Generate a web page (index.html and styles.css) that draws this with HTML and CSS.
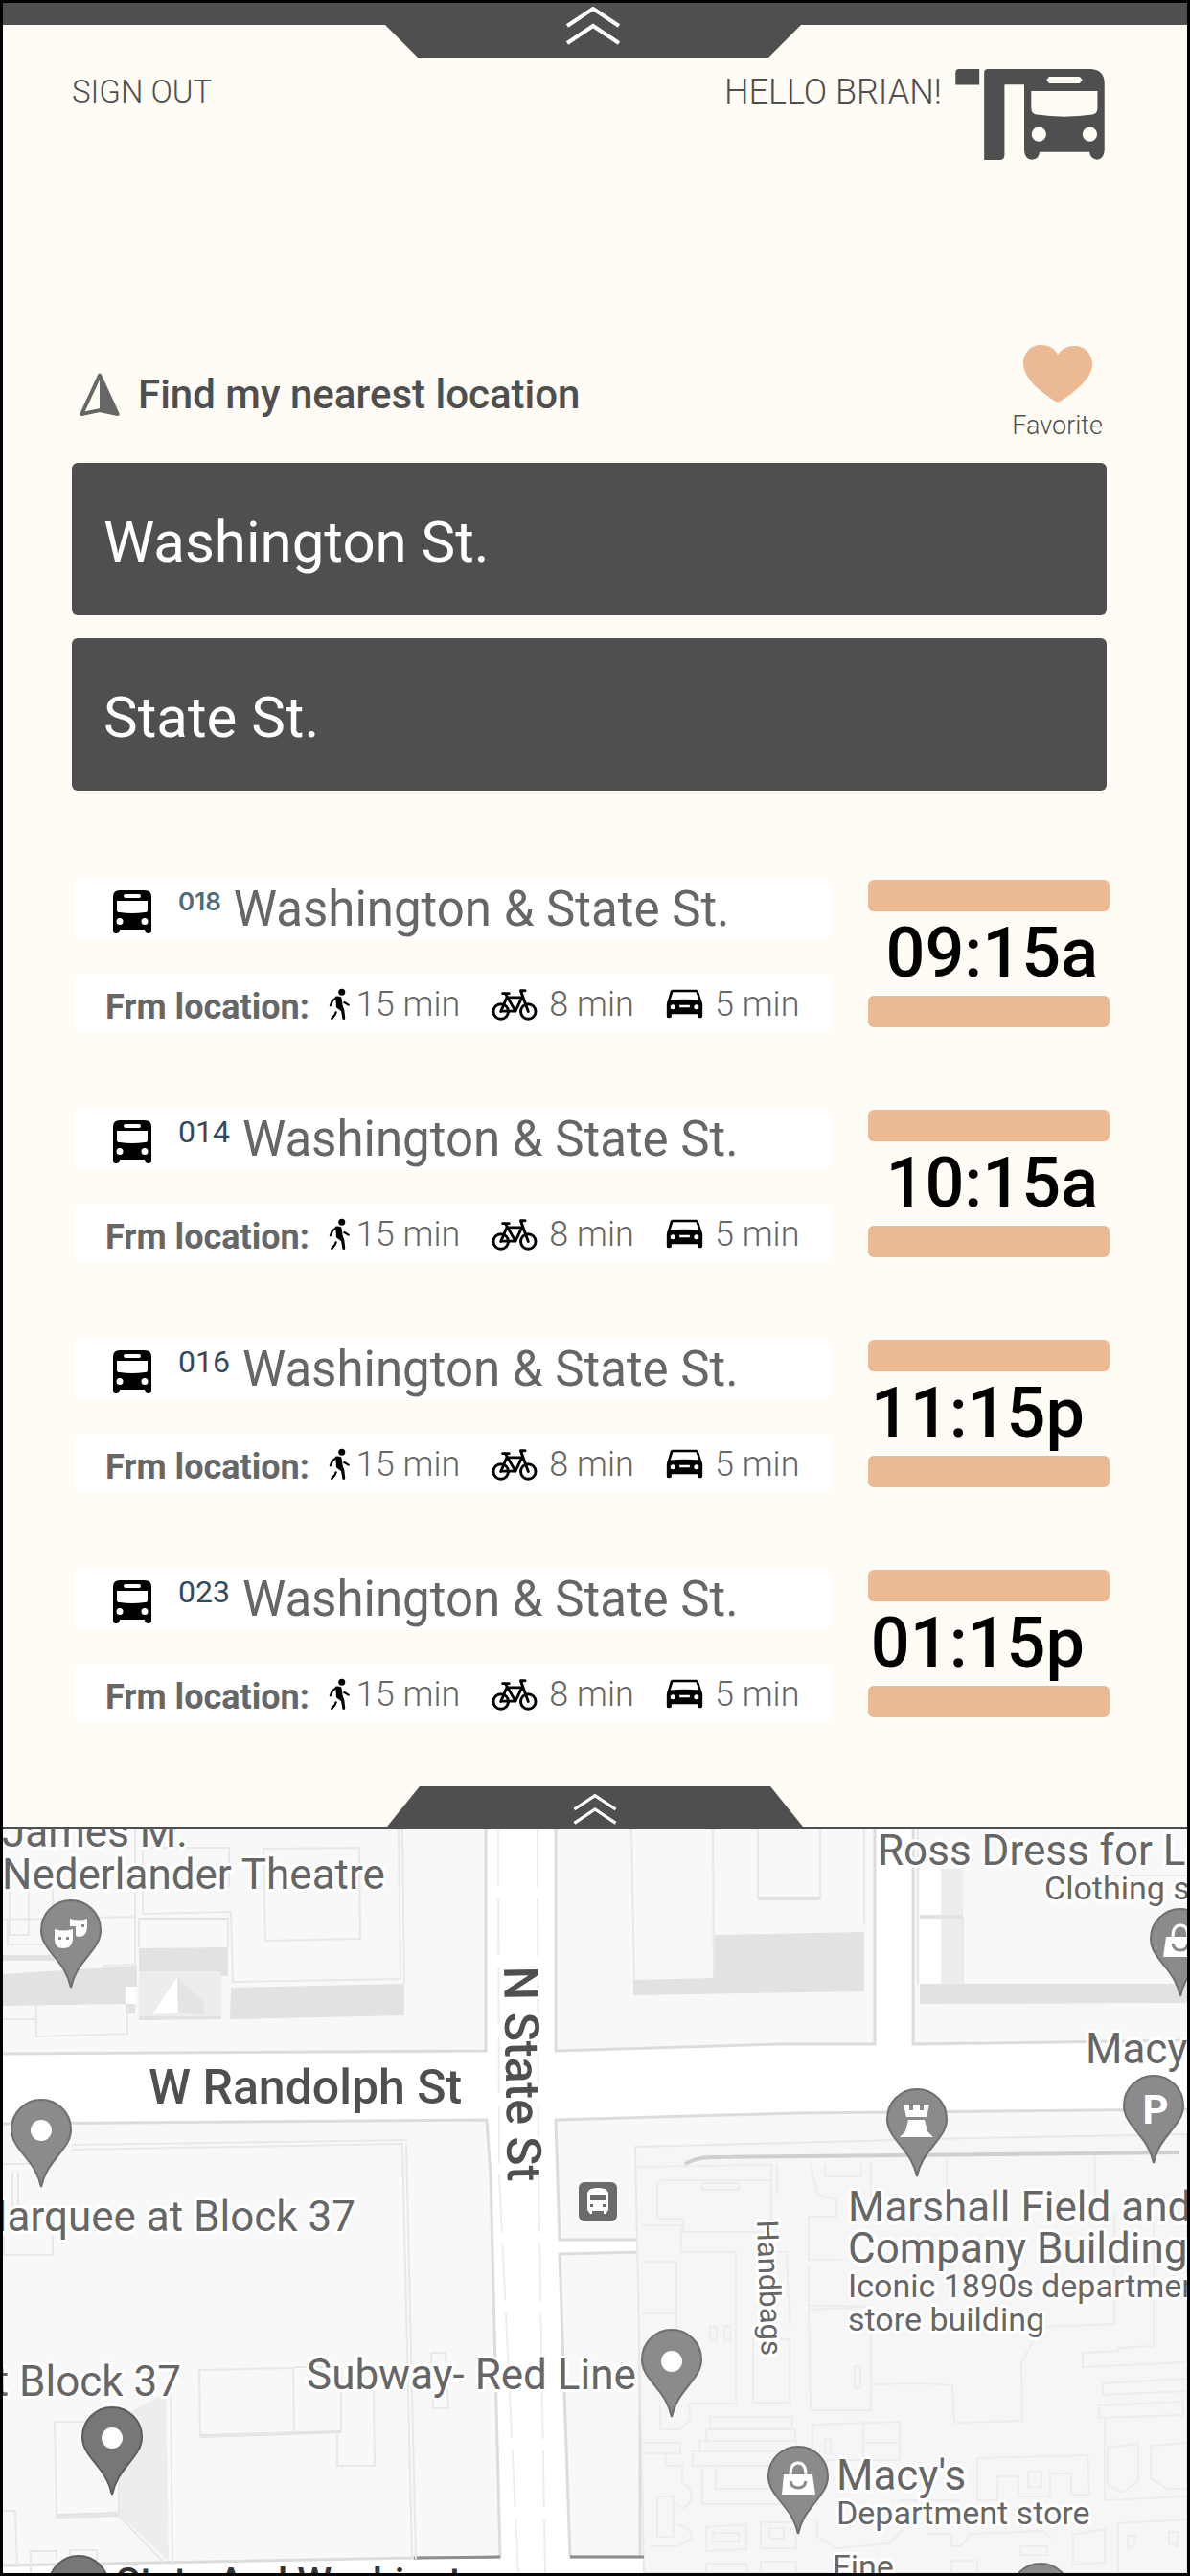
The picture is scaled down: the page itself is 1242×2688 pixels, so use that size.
FILE: index.html
```html
<!DOCTYPE html>
<html lang="en">
  <head>
    <meta charset="UTF-8" />
    <meta name="viewport" content="width=device-width, initial-scale=1.0" />
    <title>Transit Buddy</title>
    <link rel="stylesheet" href="styles.css">
  </head>
  <body>
    <!-- shared icons -->
    <svg class="sprite" aria-hidden="true">
      <symbol id="chevrons" viewBox="0 0 58 40">
        <path d="M2 20 L29 2 L56 20 M2 38 L29 20 L56 38" fill="none" stroke="#fff" stroke-width="4" />
      </symbol>
      <symbol id="bus" viewBox="0 0 40 45">
        <path fill-rule="evenodd" d="M7 0 H33 Q40 0 40 7 V42 Q40 45 37 45 Q33 45 33 41 H7 Q7 45 3 45 Q0 45 0 42 V7 Q0 0 7 0 Z M13 4 Q11 4 11 6 Q11 8 13 8 H27 Q29 8 29 6 Q29 4 27 4 Z M4 11 V21 Q4 23 7 23 Q20 25 33 23 Q36 23 36 21 V11 Z M7 29 A3.5 3.5 0 1 0 7 36 A3.5 3.5 0 1 0 7 29 Z M33 29 A3.5 3.5 0 1 0 33 36 A3.5 3.5 0 1 0 33 29 Z" />
      </symbol>
      <symbol id="walk" viewBox="66 58 72 106">
        <circle cx="109" cy="71" r="11" />
        <path d="M89 85 Q99 82 108 88 L112 116 L117 130 L120 156 Q120 161 115 161 Q112 161 111 157 L107 134 L91 121 L90 104 Z" />
        <path d="M92 89 L78 100 L72 115 M90 137 L86 146 L76 158 M117 105 L131 113" fill="none" stroke="#000" stroke-width="7" stroke-linecap="round" />
      </symbol>
      <symbol id="bike" viewBox="586 56 148 104">
        <g fill="none" stroke="#000" stroke-width="9" stroke-linecap="round" stroke-linejoin="round">
          <circle cx="616" cy="131" r="24" />
          <circle cx="704" cy="131" r="24" />
          <path d="M616 131 L635 86 H684 L663 130 H618 M663 130 L632 76 M704 131 L680 64 H694" />
          <path d="M622 73 H642" />
        </g>
      </symbol>
      <symbol id="car" viewBox="1126 64 122 98">
        <path fill-rule="evenodd" d="M1146 66 H1226 Q1231 66 1233 72 L1243 104 Q1246 108 1246 114 V154 Q1246 160 1238 160 Q1230 160 1230 154 V147 H1144 V154 Q1144 160 1136 160 Q1128 160 1128 154 V114 Q1128 108 1131 104 L1140 72 Q1142 66 1146 66 Z M1149 74 L1140 100 Q1187 96 1234 100 L1225 74 Z M1148 115 A8 8 0 1 0 1148 131 A8 8 0 1 0 1148 115 Z M1226 115 A8 8 0 1 0 1226 131 A8 8 0 1 0 1226 115 Z M1170 117 V125 H1204 V117 Z" />
      </symbol>
      <symbol id="pin" viewBox="-33 -93 66 94" overflow="visible">
        <path d="M0 0 C-3 -14 -9 -22 -17 -32 C-26 -43 -31 -50 -31 -60 A31 31 0 0 1 31 -60 C31 -50 26 -43 17 -32 C9 -22 3 -14 0 0 Z" />
      </symbol>
    </svg>

    <div class="screen">
      <div class="top-bar">
        <button class="tab tab-top" aria-label="Close menu">
          <svg class="chevrons" width="58" height="40"><use href="#chevrons" /></svg>
        </button>
      </div>

      <header class="header">
        <a class="sign-out" href="#">SIGN OUT</a>
        <div class="greeting">
          <span>HELLO BRIAN!</span>
          <svg class="logo" width="156" height="95" viewBox="108 96 468 286" role="img" aria-label="Transit Buddy logo">
            <path d="M108 146 V107 Q108 96 119 96 H183 V146 Z" />
            <path fill-rule="evenodd" d="M198 382 V108 Q198 96 210 96 H534 Q576 98 576 142 V352 Q574 380 552 381 Q531 378 529 357 H372 Q370 380 348 381 Q325 380 324 352 V145 H262 V366 Q262 382 246 382 Z M402 120 L394 130 L402 141 H498 L507 130 L498 120 Z M346 165 V220 Q347 236 362 239 Q450 252 539 239 Q553 236 554 220 V165 Z M370 278 A23 23 0 1 0 370 324 A23 23 0 1 0 370 278 Z M530 278 A23 23 0 1 0 530 324 A23 23 0 1 0 530 278 Z" />
          </svg>
        </div>
      </header>

      <main class="content">
        <div class="search-head">
          <button class="locate">
            <svg width="42" height="46" viewBox="36 78 128 140">
              <path d="M100 86 L157 209 L100 197 L43 209 Z" fill="none" stroke="#666" stroke-width="12" stroke-linejoin="round" />
              <path d="M100 86 L157 209 L100 197 Z" fill="#666" />
            </svg>
            Find my nearest location
          </button>
          <button class="favorite">
            <svg width="72" height="60" viewBox="0 0 72 60">
              <path d="M36 60 C22 52 0 36 0 19 C0 8 8 0 18 0 C27 0 33 4 36 10 C40 4 46 1 54 1 C64 1 72 9 72 20 C72 36 50 52 36 60 Z" />
            </svg>
            Favorite
          </button>
        </div>

        <form class="search">
          <input type="text" aria-label="First street" value="Washington St." />
          <input type="text" aria-label="Cross street" value="State St." />
        </form>
      </main>

      <ul class="routes">
        <li class="route">
          <div class="info">
            <div class="strip name">
              <svg width="40" height="45"><use href="#bus" /></svg>
              <span class="code code-small">018</span>
              <span class="stop">Washington &amp; State St.</span>
            </div>
            <div class="strip trips">
              <b>Frm location:</b>
              <span class="trip walk"><svg width="23" height="34"><use href="#walk" /></svg>15 min</span>
              <span class="trip"><svg width="48" height="34"><use href="#bike" /></svg>8 min</span>
              <span class="trip"><svg width="39" height="31"><use href="#car" /></svg>5 min</span>
            </div>
          </div>
          <time class="time">09:15a</time>
        </li>
        <li class="route">
          <div class="info">
            <div class="strip name">
              <svg width="40" height="45"><use href="#bus" /></svg>
              <span class="code">014</span>
              <span class="stop">Washington &amp; State St.</span>
            </div>
            <div class="strip trips">
              <b>Frm location:</b>
              <span class="trip walk"><svg width="23" height="34"><use href="#walk" /></svg>15 min</span>
              <span class="trip"><svg width="48" height="34"><use href="#bike" /></svg>8 min</span>
              <span class="trip"><svg width="39" height="31"><use href="#car" /></svg>5 min</span>
            </div>
          </div>
          <time class="time">10:15a</time>
        </li>
        <li class="route">
          <div class="info">
            <div class="strip name">
              <svg width="40" height="45"><use href="#bus" /></svg>
              <span class="code">016</span>
              <span class="stop">Washington &amp; State St.</span>
            </div>
            <div class="strip trips">
              <b>Frm location:</b>
              <span class="trip walk"><svg width="23" height="34"><use href="#walk" /></svg>15 min</span>
              <span class="trip"><svg width="48" height="34"><use href="#bike" /></svg>8 min</span>
              <span class="trip"><svg width="39" height="31"><use href="#car" /></svg>5 min</span>
            </div>
          </div>
          <time class="time pm">11:15p</time>
        </li>
        <li class="route">
          <div class="info">
            <div class="strip name">
              <svg width="40" height="45"><use href="#bus" /></svg>
              <span class="code">023</span>
              <span class="stop">Washington &amp; State St.</span>
            </div>
            <div class="strip trips">
              <b>Frm location:</b>
              <span class="trip walk"><svg width="23" height="34"><use href="#walk" /></svg>15 min</span>
              <span class="trip"><svg width="48" height="34"><use href="#bike" /></svg>8 min</span>
              <span class="trip"><svg width="39" height="31"><use href="#car" /></svg>5 min</span>
            </div>
          </div>
          <time class="time pm">01:15p</time>
        </li>
      </ul>

      <button class="tab tab-bottom" aria-label="Open map">
        <svg class="chevrons" width="50" height="32"><use href="#chevrons" /></svg>
      </button>

      <section class="map" aria-label="Map">
        <svg viewBox="0 0 1236 776">
          <!-- blocks -->
          <g class="block">
            <path d="M-5 -5 H504 V231 L-5 234 Z" />
            <path d="M577 -5 H910 V224 L810 224 L577 231 Z" />
            <path d="M950 -5 H1241 V220 L950 224 Z" />
            <path d="M-5 307 L505 303 L509 361 L519 759 L429 760 L-5 768 Z" />
            <path d="M577 303 L826 296 L1241 292 V428 H581 Z" />
            <path d="M581 443 L665 441 V759 H592 Z" />
          </g>
          <path class="macys" d="M660 331 L1010 322 L1236 318 V776 H669 Z" />

          <!-- lanes -->
          <path class="lane" d="M517 0 L518 361 L538 776 M558 0 L559 361 L566 776" />
          <path d="M429 760 L519 759 M592 759 H669" stroke="#8e8e8e" stroke-width="3" />
          <path d="M712 349 Q724 342 740 342 L1228 337" fill="none" stroke="#cfcfcf" stroke-width="4" />

          <!-- building shadows -->
          <g fill="#e2e2e2">
            <path d="M238 165 L419 161 V194 L237 198 Z" />
            <path d="M142 124 L235 123 V153 L228 153 V148 H142 Z" />
            <path d="M0 151 L140 142 V164 H128 V182 L0 184 Z" />
            <path d="M0 131 H54 V137 H0 Z M128 182 H138 V192 H128 Z M142 195 H228 V198 L142 199 Z" />
            <path d="M658 157 L743 155 V110 L899 107 V169 L658 173 Z" />
            <path d="M957 161 H1236 V181 L957 182 Z" />
            <path d="M788 70 H853 V74 H788 Z M957 89 H1002 V93 H957 Z" />
            <path d="M142 92 H235 V94 H142 Z M206 631 L353 627 V630 L206 635 Z M56 714 L121 712 V717 L56 719 Z" />
          </g>
          <g fill="#ededed">
            <path d="M142 148 H228 V195 H142 Z" />
            <path d="M979 41 H1002 V89 H979 Z M979 93 H1002 V161 H979 Z" />
            <path d="M132 608 L170 588 L173 763 L121 714 V620 Z" />
          </g>
          <path d="M156 193 L182 154 L183 191 Z M957 41 H979 V89 H957 Z M957 93 H979 V161 H957 Z M128 164 H138 V182 H128 Z" fill="#fff" />
          <path d="M182 154 L210 181 V193 L183 191 Z" fill="#e4e4e4" />

          <!-- building outlines -->
          <g class="outline">
            <path d="M272 20 L372 19 L373 114 L274 116 Z" />
            <path d="M413 0 L415 156 L240 159 L238 86 L146 88 V19 H236 V60 M417 0 L419 161" />
            <path d="M142 92 V123 M235 92 V123 M138 0 V141 L104 142 M0 94 L138 91 M5 95 V120 H50 M27 60 V110 H7 V60 M52 60 V85" />
            <path d="M35 184 V216 L130 213 V182 M0 198 H35" />
            <path d="M656 0 L659 157 M741 0 L742 155 M788 0 V73 M853 0 V73 M899 0 V98 M1002 91 V161 M955 0 V161 M1160 48 H1236" />
            <path d="M72 329 L422 324 M72 334 L417 328 L427 761 M421 328 L431 761 M0 349 H30 M10 357 V400 M16 357 V400" />
            <path d="M205 564 L303 562 L304 629 L206 634 Z M303 561 H353 V629 M387 584 L388 664 H349 V631" />
            <path d="M447 546 H462 L465 604 H449 Z M54 618 L121 618 V714 L56 718 Z M175 575 L177 768 M121 716 L168 765" />
            <path d="M1 424 V444 H52 V424 M0 711 H13 L15 770 M29 776 V753 H56 V762 M70 762 V752 H98 V768" />
          </g>

          <!-- department store floor plan -->
          <g class="plan">
            <path d="M662 352 L802 350 V420 H710 V406 H683 V368 L690 366 H802 M730 369 H768 V376 H730 Z M808 350 V381 M843 348 L850 381 L870 386 V404 H841 V449 H876 M858 350 V362 H896 V348 M906 346 V384 M985 344 V384 M1140 340 V384" />
            <path d="M667 413 H708 V441 H765 V599 H716 L717 616 L706 626 H686 V600 M667 451 H703 V505 H667 M703 505 V580 M738 519 H745 V533 H738 Z M753 518 H759 V533 H753 Z" />
            <path d="M785 441 H818 L821 517 M783 532 H821 V598 H783 Z M841 455 V497 H900 M841 501 L906 498 V606 L843 606 Z M889 560 H895 V583 H889 Z" />
            <path d="M738 613 H824 V625 H738 Z M734 626 H827 V638 H734 Z M727 638 H828 V649 H727 Z M720 649 H840 V664 H720 Z M730 664 V704 H851 M744 664 V688 H800" />
            <path d="M845 621 L936 618 V658 H845 Z M898 620 V658 M898 640 H936 M858 636 H864 V651 H858 Z" />
            <path d="M906 579 L960 578 L991 580 L993 619 L1064 617 L1063 556 L1084 519 L1160 516 V400 M1127 561 L1236 556 M1127 561 V546 L1164 544 V541 L1201 539 V400" />
            <path d="M1148 578 L1236 573 V586 L1148 590 Z M1144 601 L1232 597 V611 L1144 614 Z M1150 616 V700 L1236 696 M1153 645 L1185 641 V680 L1168 692 L1153 684 Z M1236 640 L1198 643 V677 L1215 688 H1236" />
            <path d="M1017 700 V656 L1132 653 L1134 694 H1115 V672 H1093 V696 H1060 V675 H1038 V700 Z M1070 670 H1084 V686 H1070 Z M936 700 H1000" />
            <path d="M668 640 H707 V651 H670 M692 651 V664 H709 V682 Q720 686 718 700 Q712 712 703 704 M683 696 H700 V738 H683 Z M703 725 Q722 730 718 740 L705 748 H675" />
            <path d="M734 728 L776 725 V751 L734 753 Z M741 734 H768 V743 H741 Z M791 723 H828 V750 H791 Z M800 729 H815 V740 H800 Z M734 776 V766 H776 V776 M791 776 V764 H828 V776" />
            <path d="M850 720 V738 L870 750 L925 745 L940 730 M965 735 H990 V748 H1000 L1010 735 L1085 732 L1095 740 M1062 748 H1090 V757 H1062 Z M990 776 V763 H1017 V776 M1117 736 L1150 730 V765 L1117 767 Z M1164 776 V724 L1236 720 M1174 737 H1182 L1180 747 L1174 750 Z M1217 733 H1226 V748 L1217 745 Z" />
          </g>

          <!-- labels -->
          <g class="label">
            <text x="-1" y="18">James M.</text>
            <text x="-1" y="62">Nederlander Theatre</text>
            <text x="913" y="37">Ross Dress for Less</text>
            <text class="small" x="1087" y="73">Clothing store</text>
            <text x="1130" y="244">Macy's</text>
            <text x="368" y="419" text-anchor="end">Marquee at Block 37</text>
            <text x="186" y="591" text-anchor="end">Shops at Block 37</text>
            <text x="317" y="584">Subway- Red Line</text>
            <text x="882" y="409">Marshall Field and</text>
            <text x="882" y="452">Company Building</text>
            <text class="small" x="882" y="488">Iconic 1890s department</text>
            <text class="small" x="882" y="523">store building</text>
            <text x="870" y="689">Macy's</text>
            <text class="small" x="870" y="725">Department store</text>
            <text class="small" x="866" y="781">Fine</text>
            <text class="aisle" transform="translate(787 408) rotate(88)">Handbags</text>
            <text class="street" x="152" y="286">W Randolph St</text>
            <text class="street" transform="translate(523 143) rotate(89)">N State St</text>
            <text class="station" x="118" y="799">State And Washington</text>
          </g>

          <!-- pins -->
          <g class="pins">
            <use href="#pin" x="38" y="72" width="66" height="94" />
            <use href="#pin" x="7" y="280" width="66" height="94" />
            <use class="dark" href="#pin" x="81" y="601" width="66" height="94" />
            <use href="#pin" x="665" y="520" width="66" height="94" />
            <use href="#pin" x="797" y="642" width="66" height="94" />
            <use href="#pin" x="921" y="269" width="66" height="94" />
            <use href="#pin" x="1168" y="255" width="66" height="94" />
            <use href="#pin" x="1196" y="81" width="66" height="94" />
            <use class="dark" href="#pin" x="46" y="756" width="66" height="94" />
            <use href="#pin" x="1050" y="764" width="66" height="94" />
          </g>
          <g fill="#fff">
            <circle cx="40" cy="314" r="11" />
            <circle cx="114" cy="635" r="11" />
            <circle cx="698" cy="555" r="11" />
            <!-- theatre masks -->
            <path fill-rule="evenodd" d="M54 104 Q63 107 73 104 V115 Q72 124 63 124 Q54 124 54 115 Z M58 112 V115 H61 V112 Z M66 112 V115 H69 V112 Z" />
            <path fill-rule="evenodd" d="M70 93 Q79 96 88 93 V103 Q87 112 79 112 L76 111 V101 H70 Z M82 99 V102 H85 V99 Z" />
            <!-- rook -->
            <path d="M940 287 H946 V293 H950 V287 H957 V293 H961 V287 H967 L964 300 H943 Z M945 303 H962 L965 315 L971 321 H936 L942 315 Z" />
            <!-- shopping bags -->
            <path d="M815 673 H845 L848 694 H813 Z" />
            <path d="M1214 112 H1244 L1247 133 H1211 Z" />
          </g>
          <path d="M822 673 Q822 661 830 661 Q838 661 838 673 M1221 112 Q1221 100 1229 100 Q1237 100 1237 112" fill="none" stroke="#fff" stroke-width="3" />
          <path d="M822 680 Q823 687 830 687 Q837 687 838 680 M1221 119 Q1222 126 1229 126 Q1236 126 1237 119" fill="none" stroke="#8b8b8b" stroke-width="3" />
          <text class="parking" x="1203" y="307" text-anchor="middle">P</text>

          <!-- bus stop -->
          <rect x="601" y="368" width="40" height="41" rx="6" fill="#6b6b6b" />
          <path fill="#fff" fill-rule="evenodd" d="M614 375 Q621 373 628 375 Q632 376 632 381 V397 L629 401 H627 V398 H615 V401 H613 L610 397 V381 Q610 376 614 375 Z M613 381 V387 H629 V381 Z M613 391 V394 H616 V391 Z M626 391 V394 H629 V391 Z" />
        </svg>
      </section>
    </div>
  </body>
</html>
```

FILE: styles.css
```css
* {
  box-sizing: border-box;
}
body {
  margin: 0;
  background: #fffcf6;
  color: #4f4f4f;
  font-family: Roboto, "Liberation Sans", sans-serif;
}
button {
  padding: 0;
  border: 0;
  background: none;
  color: inherit;
  font-family: inherit;
}
svg {
  display: block;
  flex: none;
}
.sprite {
  position: absolute;
  width: 0;
  height: 0;
}
.screen {
  display: flex;
  flex-direction: column;
  min-height: 100vh;
  border: 3px solid #000;
}

/* drawer tabs */
.top-bar {
  position: relative;
  height: 23px;
  background: #4f4f4f;
}
.tab {
  display: flex;
  justify-content: center;
  width: 434px;
  background: #4f4f4f;
}
.tab-top {
  position: absolute;
  top: 0;
  left: 50%;
  margin-left: -219px;
  height: 57px;
  padding-top: 4px;
  clip-path: polygon(0 0, 100% 0, 100% 23px, 400px 100%, 34px 100%, 0 23px);
}
.tab-bottom {
  align-self: center;
  height: 42px;
  margin-top: 66px;
  padding-top: 8px;
  clip-path: polygon(34px 0, 400px 0, 100% 100%, 0 100%);
}

/* header */
.header {
  display: flex;
  justify-content: space-between;
  padding: 46px 86px 0 72px;
  font-weight: 300;
  line-height: 40px;
}
.sign-out {
  padding-top: 4px;
  color: inherit;
  font-size: 33px;
  text-decoration: none;
}
.greeting {
  display: flex;
  gap: 14px;
  font-size: 36px;
}
.greeting span {
  padding-top: 4px;
}
.logo {
  fill: #4f4f4f;
}

/* search */
.content {
  padding: 193px 84px 0 72px;
}
.search-head {
  display: flex;
  justify-content: space-between;
  align-items: flex-start;
  padding: 0 4px 0 8px;
}
.locate {
  display: flex;
  align-items: center;
  gap: 19px;
  padding-top: 27px;
  font-size: 42px;
  font-weight: 500;
  line-height: 50px;
}
.favorite {
  display: flex;
  flex-direction: column;
  align-items: center;
  gap: 8px;
  font-size: 27px;
  font-weight: 300;
  line-height: 32px;
}
.favorite svg {
  fill: #ebb994;
}
.search {
  display: flex;
  flex-direction: column;
  gap: 24px;
  margin-top: 23px;
}
.search input {
  width: 100%;
  height: 159px;
  padding: 6px 33px 0;
  border: 0;
  border-radius: 6px;
  background: #4f4f4f;
  color: #fff;
  font-family: inherit;
  font-size: 60px;
}

/* routes */
.routes {
  display: flex;
  flex-direction: column;
  gap: 80px;
  margin: 93px 0 0;
  padding: 0 81px 0 75px;
  list-style: none;
}
.route {
  display: flex;
  gap: 39px;
  color: #666;
}
.info {
  display: flex;
  flex: 1;
  flex-direction: column;
  gap: 38px;
}
.strip {
  display: flex;
  align-items: center;
  height: 61px;
  border-radius: 6px;
  background: #fff;
  white-space: nowrap;
}
.name {
  padding: 6px 0 0 40px;
}
.code {
  align-self: flex-start;
  margin: 2px 13px 0 28px;
  color: #2f4a62;
  font-size: 32px;
  line-height: 30px;
}
.code-small {
  color: #4f6a78;
  font-family: Inter, sans-serif;
  font-size: 26px;
  font-weight: 600;
}
.stop {
  margin-top: -6px;
  font-size: 51px;
}
.trips {
  gap: 33px;
  padding-left: 32px;
  font-size: 36px;
}
.trips b {
  margin-right: -13px;
  padding-top: 6px;
}
.trip {
  display: flex;
  align-items: center;
  gap: 12px;
  font-weight: 300;
}
.trip.walk {
  gap: 6px;
}
.time {
  display: block;
  width: 252px;
  height: 154px;
  padding-right: 12px;
  color: #000;
  font-size: 72px;
  font-weight: 500;
  line-height: 88px;
  text-align: right;
}
.time::before,
.time::after {
  content: "";
  display: block;
  height: 33px;
  margin-right: -12px;
  border-radius: 6px;
  background: #ebb994;
}
.time.pm {
  padding-right: 26px;
}
.time.pm::before,
.time.pm::after {
  margin-right: -26px;
}

/* map */
.map {
  overflow: hidden;
  border-top: 3px solid #4f4f4f;
  background: #fff;
}
.map svg {
  width: 100%;
  height: auto;
}
.block path {
  fill: #f8f8f8;
  stroke: #dcdcdc;
  stroke-width: 3px;
}
.macys {
  fill: #f6f6f6;
  stroke: #e8e8e8;
  stroke-width: 2px;
}
.lane {
  fill: none;
  stroke: #ededed;
  stroke-width: 2px;
  stroke-dasharray: 60 12;
}
.outline path {
  fill: none;
  stroke: #e8e8e8;
  stroke-width: 2px;
}
.plan path {
  fill: none;
  stroke: #ededed;
  stroke-width: 2px;
}
.label text {
  fill: #666;
  stroke: #fff;
  stroke-width: 6px;
  stroke-linejoin: round;
  paint-order: stroke;
  font-size: 44px;
}
.label .small {
  font-size: 34px;
}
.label .aisle {
  font-size: 31px;
}
.label .street {
  fill: #4f4f4f;
  font-size: 50px;
  font-weight: 500;
}
.label .station {
  fill: #333;
  font-size: 41px;
  font-weight: 500;
}
.pins use {
  fill: #8b8b8b;
  stroke: #6f6f6f;
  stroke-width: 2px;
}
.pins .dark {
  fill: #777;
  stroke: #5c5c5c;
}
.parking {
  fill: #fff;
  font-size: 42px;
  font-weight: 700;
}
```
